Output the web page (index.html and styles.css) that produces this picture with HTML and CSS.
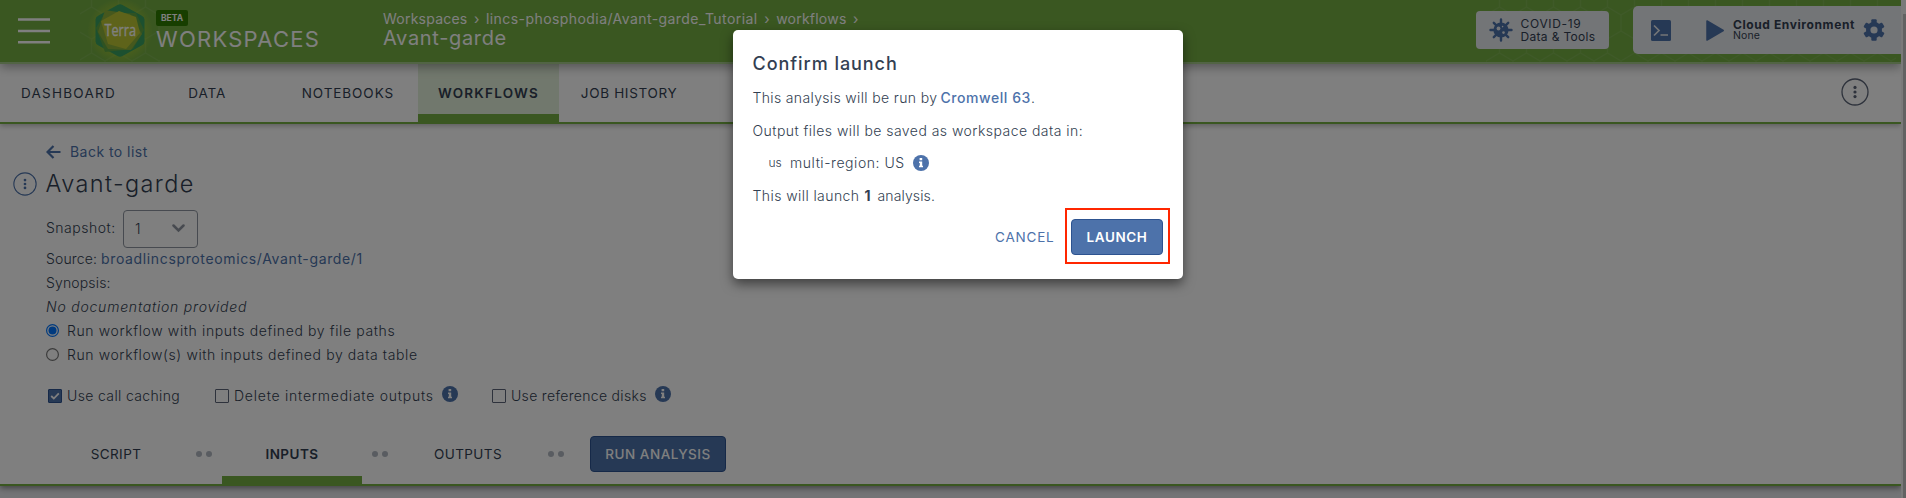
FILE: index.html
```
<!DOCTYPE html>
<html lang="en"><head><meta charset="utf-8"><title>Avant-garde</title><link rel="stylesheet" href="styles.css"></head>
<body>
<svg width="0" height="0" class="defs"><defs>
<symbol id="info" viewBox="0 0 16 16"><circle cx="8" cy="8" r="8" fill="#4d72aa"/><path d="M6.6 3.1h2.6v2.2H6.6zM6 6.5h3.2v4.2H10v1.5H6v-1.5h.8V8H6z" fill="#fff"/></symbol>
<symbol id="kebab" viewBox="0 0 28 28"><circle cx="14" cy="14" r="13" fill="none" stroke="currentColor" stroke-width="1.3"/><circle cx="14" cy="9.4" r="1.6" fill="currentColor"/><circle cx="14" cy="14" r="1.6" fill="currentColor"/><circle cx="14" cy="18.6" r="1.6" fill="currentColor"/></symbol>
<pattern id="hex" width="27" height="46" patternUnits="userSpaceOnUse"><path d="M13.5 0v7M0 15l13.5-8L27 15M0 15v16M27 15v16M0 31l13.5 8L27 31M13.5 39v7" fill="none" stroke="#fff" stroke-opacity=".07" stroke-width="1.4"/></pattern>
<radialGradient id="glow"><stop offset=".6" stop-color="#b0cc30" stop-opacity=".6"/><stop offset="1" stop-color="#b0cc30" stop-opacity="0"/></radialGradient>
</defs></svg>
<div class="page">
<header class="top">
  <svg class="menu" width="34" height="30" viewBox="0 0 34 30"><path d="M1 4.5h32M1 16h32M1 27.3h32" stroke="#fff" stroke-width="2.4"/></svg>
  <svg class="logo" width="84" height="62" viewBox="0 0 84 62"><rect x="2" width="80" height="62" fill="url(#hex)"/><circle cx="42" cy="31" r="33" fill="url(#glow)"/><path d="M39.500 5q2.500-1.500 5 0l19 10.500q3 1.500 3 4v22q0 2.500-3 4L44.500 56q-2.500 1.500-5 0l-19-10.500q-3-1.500-3-4v-22q0-2.500 3-4z" fill="#38a060"/><path d="M27 13l31 0 8 17-11 19-28 3-9-24z" fill="#5fa544"/><path d="M27 10l25 4 12 20-11 16-23-1-10-17z" fill="#8cb03a"/><path d="M41 11l17 6 4 16-14 16-18-5-7-23z" fill="#bcc734"/><text x="26.500" y="36" class="logo-text" textLength="31.500" lengthAdjust="spacingAndGlyphs">Terra</text></svg>
  <div class="brand"><span class="beta">BETA</span><span class="brand-name">WORKSPACES</span></div>
  <div class="crumbs"><div class="path"><span class="c1">Workspaces</span><i>›</i><span class="c2">lincs-phosphodia/Avant-garde_Tutorial</span><i>›</i><span class="c1">workflows</span><i>›</i></div><div class="ws">Avant-garde</div></div>
  <div class="header-right">
    <svg class="hex-bg" width="410" height="62"><rect width="410" height="62" fill="url(#hex)"/></svg>
    <div class="covid"><svg width="24" height="24" viewBox="-12 -12 24 24"><g stroke="#4d72aa" stroke-width="2.400" stroke-linecap="round"><path d="M0-10.500v21M-10.500 0h21M-7.200-7.200l14.400 14.400M7.200-7.200l-14.400 14.400"/></g><circle r="7.600" fill="#4d72aa"/><g fill="#e7eaee"><circle cx="-2.500" cy="-1.500" r="1.900"/><circle cx="2.500" cy="2.600" r="1.300"/><circle cx="1.600" cy="-3.400" r=".8"/></g></svg><div><p class="cv1">COVID-19</p><p class="cv2">Data &amp; Tools</p></div></div>
    <div class="cloud"><svg class="term" width="20" height="21" viewBox="0 0 20 21"><rect width="20" height="21" rx="1.500" fill="#4d72aa"/><path d="M3 5.500l5 5-5 5M9.500 15H17" fill="none" stroke="#e7eaee" stroke-width="1.700"/></svg><svg class="play" width="18" height="21" viewBox="0 0 18 21"><path d="M1 1l16.200 9.500L1 20z" fill="#4d72aa" stroke="#4d72aa" stroke-width="1.500" stroke-linejoin="round"/></svg><div class="env"><p class="e1">Cloud Environment</p><p class="e2">None</p></div><svg width="22" height="22" viewBox="-11 -11 22 22"><g fill="#4d72aa"><circle r="8"/><rect x="-2.700" y="-10.700" width="5.400" height="21.400" rx="1"/><rect x="-2.700" y="-10.700" width="5.400" height="21.400" rx="1" transform="rotate(60)"/><rect x="-2.700" y="-10.700" width="5.400" height="21.400" rx="1" transform="rotate(120)"/></g><circle r="3.600" fill="#e7eaee"/></svg></div>
  </div>
</header>
<nav class="tabs"><a class="t1">DASHBOARD</a><a class="t2">DATA</a><a class="t3">NOTEBOOKS</a><a class="t4 on">WORKFLOWS</a><a class="t5">JOB HISTORY</a><svg class="more" width="28" height="28"><use href="#kebab"/></svg></nav>
<main class="content">
  <div class="back"><svg width="15" height="14" viewBox="0 0 15 14"><path d="M7.500 1L1.500 7l6 6M2 7h12.500" fill="none" stroke="#4d72aa" stroke-width="2.200"/></svg><span>Back to list</span></div>
  <div class="title"><svg width="24" height="24"><use href="#kebab" width="24" height="24"/></svg><h1>Avant-garde</h1></div>
  <div class="snapshot"><span class="snap-label">Snapshot:</span><div class="select"><span>1</span><svg width="13" height="9" viewBox="0 0 13 9"><path d="M1.500 1.500l5 5 5-5" fill="none" stroke="#8f95a0" stroke-width="2.500" stroke-linecap="round"/></svg></div></div>
  <div class="line"><span class="src">Source:</span><a class="link">broadlincsproteomics/Avant-garde/1</a></div>
  <div class="line syn">Synopsis:</div>
  <div class="line nodoc">No documentation provided</div>
  <div class="line radio"><svg width="13" height="13"><circle cx="6.500" cy="6.500" r="5.900" fill="none" stroke="#0075ff" stroke-width="1.200"/><circle cx="6.500" cy="6.500" r="4" fill="#0075ff"/></svg><span>Run workflow with inputs defined by file paths</span></div>
  <div class="line radio"><svg width="13" height="13"><circle cx="6.500" cy="6.500" r="5.900" fill="none" stroke="#767676" stroke-width="1.200"/></svg><span class="r2">Run workflow(s) with inputs defined by data table</span></div>
  <div class="checks">
    <span class="box checked"><svg width="10" height="8" viewBox="0 0 10 8"><path d="M1.200 4l2.600 2.500L8.800 1.300" fill="none" stroke="#fff" stroke-width="1.800"/></svg></span><span class="k1">Use call caching</span>
    <span class="box"></span><span class="k2">Delete intermediate outputs</span><svg class="inf" width="16" height="16"><use href="#info"/></svg>
    <span class="box b3"></span><span class="k3">Use reference disks</span><svg class="inf" width="16" height="16"><use href="#info"/></svg>
  </div>
  <div class="steps"><a class="s1">SCRIPT</a><span class="dots"></span><a class="s2 on">INPUTS</a><span class="dots"></span><a class="s3">OUTPUTS</a><span class="dots"></span><button class="btn run">RUN ANALYSIS</button></div>
</main>
</div>
<div class="scroll"></div>
<div class="overlay"><div class="modal">
  <h2>Confirm launch</h2>
  <p><span class="m1">This analysis will be run by</span><a>Cromwell 63</a>.</p>
  <p class="m2">Output files will be saved as workspace data in:</p>
  <p class="region"><small>us</small><span class="m3">multi-region: US</span><svg width="16" height="16"><use href="#info"/></svg></p>
  <p><span class="m4">This will launch</span><b>1</b><span class="m5">analysis.</span></p>
  <div class="actions"><span class="cancel">CANCEL</span><div class="mark"><button class="btn launch">LAUNCH</button></div></div>
</div></div>
</body></html>
```
FILE: styles.css
```
* { box-sizing: border-box; }
body { margin: 0; width: 1906px; height: 498px; overflow: hidden; display: flex; background: #f4f4f4; font: 300 14px/24px Inter, "Open Sans", sans-serif; color: #333f52; font-kerning: normal; }
p, h1, h2 { margin: 0; }
svg { flex: none; display: block; }
a, span, p, h1, h2 { white-space: nowrap; }
.defs { position: absolute; }
.page { width: 1901px; height: 498px; background: #e7e9ed; overflow: hidden; }
.scroll { width: 3px; margin: 14px 0 0 2px; background: #c4c4c4; }

.top { position: relative; z-index: 2; height: 64px; display: flex; background: #74ae43; border-bottom: 2px solid #a4c98a; box-shadow: 0 3px 10px rgba(0,0,0,.35); color: #fff; font-weight: 400; }
.menu { margin: 15px 0 0 17px; }
.logo { margin-left: 27px; }
.logo-text { font: 400 16px "Open Sans", sans-serif; fill: #fff; stroke: #fff; stroke-width: .3; }
.brand { width: 227px; margin-left: -6px; padding-top: 10px; display: flex; flex-direction: column; align-items: flex-start; }
.beta { width: 32px; height: 16px; border-radius: 2px; background: #2e7d00; font-size: 8.5px; font-weight: 700; line-height: 16px; text-align: center; }
.brand-name { font-size: 22px; line-height: 26px; letter-spacing: 1.250px; }
.crumbs { padding-top: 9px; }
.path { display: flex; line-height: 20px; }
.path i { width: 18.500px; text-align: center; font-style: normal; }
.c1 { letter-spacing: .23px; }
.c2 { letter-spacing: .43px; }
.ws { font-size: 20px; line-height: 18px; letter-spacing: .67px; }
.header-right { position: relative; margin-left: auto; width: 425px; display: flex; }
.hex-bg { position: absolute; left: 10px; top: 0; }
.covid { position: relative; width: 133px; height: 38px; margin-top: 11px; padding: 7px 0 0 13px; display: flex; gap: 7.500px; background: #e7eaee; border-radius: 4px; color: #333f52; font-size: 12px; line-height: 13px; }
.covid div { margin-top: -1px; }
.cv1 { letter-spacing: .68px; }
.cv2 { letter-spacing: .33px; }
.cloud { position: relative; width: 268px; height: 48px; margin: 6px 0 0 24px; padding-left: 18px; display: flex; align-items: center; background: #e7eaee; border-radius: 5px 0 0 5px; color: #333f52; }
.play { margin-left: 35px; }
.env { width: 131px; margin: -1px -1px 0 9px; }
.e1 { font-size: 12px; font-weight: 700; line-height: 13px; letter-spacing: .6px; }
.e2 { font-size: 10.500px; line-height: 10px; letter-spacing: .12px; }

.tabs { position: relative; z-index: 1; height: 60px; display: flex; padding-left: 0; background: #fff; border-bottom: 2px solid #74ae43; box-shadow: 0 2px 5px rgba(0,0,0,.25); font-size: 13.500px; font-weight: 400; }
.tabs a { width: 140.600px; height: 58px; line-height: 58px; text-align: center; }
.tabs .t1 { width: 137px; letter-spacing: 1.250px; }
.t2 { letter-spacing: .92px; }
.t3 { letter-spacing: .94px; }
.tabs .t4 { letter-spacing: 1.210px; background: #e3f0da; border-bottom: 8px solid #74ae43; font-weight: 600; }
.t5 { letter-spacing: .67px; }
.more { margin: 13.500px 32px 0 auto; color: #5c6578; }

.content { height: 362px; padding: 15px 0 0 46px; background: #fff; border-bottom: 2px solid #74ae43; box-shadow: 0 2px 6px rgba(0,0,0,.45); }
.back { display: flex; align-items: center; height: 25px; gap: 9px; color: #4d72aa; font-weight: 400; letter-spacing: .46px; }
.title { display: flex; align-items: center; height: 39px; margin-left: -33px; gap: 8.500px; color: #4d72aa; }
.title h1 { font-size: 23.500px; font-weight: 300; letter-spacing: 1.400px; color: #333f52; }
.snapshot { display: flex; align-items: center; height: 50px; margin-bottom: -6px; }
.snap-label { width: 77px; letter-spacing: .5px; }
.select { width: 75px; height: 38px; margin-top: 1px; padding: 0 12px 0 11px; display: flex; align-items: center; justify-content: space-between; border: 1px solid #8f95a0; border-radius: 4px; }
.line { display: flex; height: 24px; line-height: 24px; }
.src { width: 55px; letter-spacing: .13px; }
.link { color: #4d72aa; font-weight: 400; letter-spacing: .64px; }
.syn { letter-spacing: .15px; }
.nodoc { font-style: italic; letter-spacing: .78px; }
.radio { gap: 8px; letter-spacing: .62px; }
.radio svg { margin-top: 4.500px; }
.r2 { letter-spacing: .6px; }
.checks { display: flex; align-items: center; height: 26px; margin-top: 16px; padding-left: 2px; }
.box { width: 14px; height: 14px; border: 1px solid #5c6578; border-radius: 1px; margin-right: 5px; display: flex; align-items: center; justify-content: center; }
.box.checked { background: #4d72aa; border-color: #2d5390; }
.k1 { width: 148px; letter-spacing: .36px; }
.k2 { width: 208px; letter-spacing: .77px; }
.k3 { width: 144px; letter-spacing: .32px; }
.inf { margin-bottom: 4px; }
.b3 { margin-left: 34px; }
.steps { display: flex; height: 60px; margin-top: 15px; font-size: 13.500px; font-weight: 400; }
.steps a { width: 140px; height: 60px; line-height: 60px; text-align: center; }
.s1 { letter-spacing: .39px; }
.steps .s2 { letter-spacing: .45px; font-weight: 600; border-bottom: 8px solid #74ae43; }
.s3 { letter-spacing: .41px; }
.dots { width: 36px; display: flex; align-items: center; justify-content: center; gap: 4px; }
.dots::before, .dots::after { content: ""; width: 6px; height: 6px; border-radius: 50%; background: #b3b9c2; }
.btn { height: 36px; padding: 0; border: 1px solid #2d5390; border-radius: 4px; background: #4d72aa; color: #fff; font: 500 13.500px/34px Inter, "Open Sans", sans-serif; }
.run { width: 136px; margin: 12px 0 0 16px; letter-spacing: .51px; }

.overlay { position: absolute; inset: 0; z-index: 5; padding: 30px 0 0 733px; background: rgba(0,0,0,.5); }
.modal { width: 450px; height: 249px; padding: 22px 13px 0 19.500px; background: #fff; border-radius: 5px; box-shadow: 0 5px 12px rgba(0,0,0,.5); }
.modal h2 { font-size: 18px; font-weight: 500; line-height: 24px; letter-spacing: .95px; margin-bottom: 6px; }
.modal p { display: flex; align-items: center; height: 32.500px; line-height: 32.500px; }
.m1 { width: 188px; letter-spacing: .35px; }
.modal p a { color: #4d72aa; font-weight: 500; letter-spacing: .56px; }
.m2 { letter-spacing: .46px; }
.region small { width: 21.500px; margin-left: 16px; font-size: 12px; }
.m3 { width: 123px; letter-spacing: .55px; }
.m4 { width: 112px; letter-spacing: .42px; }
.modal b { width: 13px; font-weight: 700; }
.m5 { letter-spacing: .12px; }
.actions { display: flex; justify-content: flex-end; align-items: center; margin-top: -4px; height: 56px; }
.cancel { width: 70px; margin-top: 1px; color: #4d72aa; font-size: 13.500px; font-weight: 400; letter-spacing: .8px; }
.mark { width: 105px; height: 56px; border: 2px solid #ff2600; padding: 8px 4px; line-height: 0; }
.launch { width: 92px; margin-top: 1px; font-weight: 600; letter-spacing: .6px; }
```
